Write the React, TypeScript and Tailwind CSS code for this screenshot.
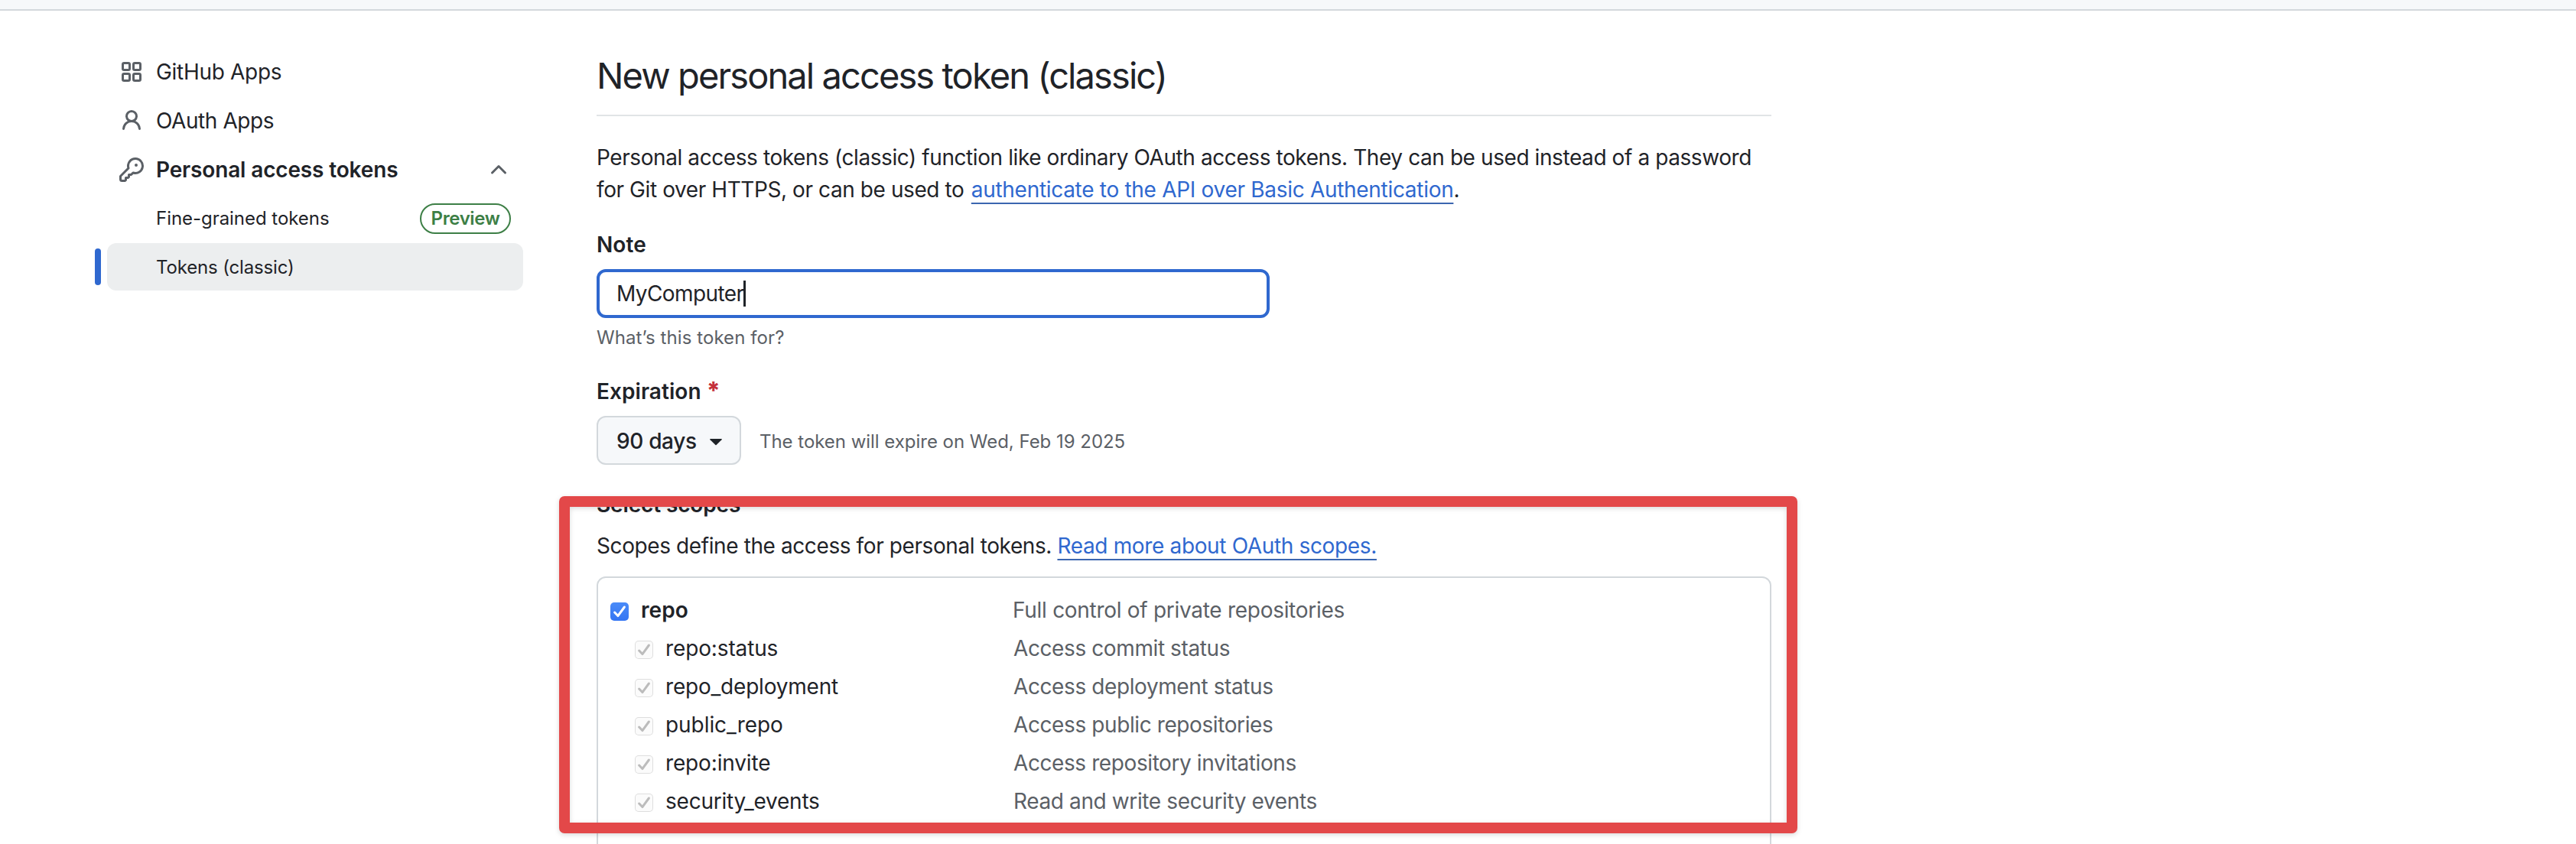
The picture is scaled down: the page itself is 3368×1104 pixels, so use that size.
const scopes = [
  { name: 'repo:status', desc: 'Access commit status', nameCls: 'tracking-[-0.13px]', descCls: 'tracking-[-0.4px]' },
  { name: 'repo_deployment', desc: 'Access deployment status', nameCls: 'tracking-[-0.2px]', descCls: 'tracking-[-0.4px]' },
  { name: 'public_repo', desc: 'Access public repositories', nameCls: 'tracking-[-0.06px]', descCls: 'tracking-[-0.4px]' },
  { name: 'repo:invite', desc: 'Access repository invitations', nameCls: 'tracking-[-0.15px]', descCls: 'tracking-[-0.41px]' },
  { name: 'security_events', desc: 'Read and write security events', nameCls: 'tracking-[-0.22px]', descCls: 'tracking-[-0.38px]' },
];

const link =
  'text-[#2f68cf] underline decoration-[#3b66b0] decoration-2 underline-offset-[7px] [text-decoration-skip-ink:none]';

const icons = {
  person:
    'M10.561 8.073a6.005 6.005 0 0 1 3.432 5.142.75.75 0 1 1-1.498.07 4.5 4.5 0 0 0-8.99 0 .75.75 0 0 1-1.498-.07 6.004 6.004 0 0 1 3.431-5.142 3.999 3.999 0 1 1 5.123 0ZM10.5 5a2.5 2.5 0 1 0-5 0 2.5 2.5 0 0 0 5 0Z',
  key: 'M10.5 0a5.499 5.499 0 1 1-1.288 10.848l-.932.932a.749.749 0 0 1-.53.22H7v.75a.749.749 0 0 1-.22.53l-.5.5a.749.749 0 0 1-.53.22H5v.75a.749.749 0 0 1-.22.53l-.5.5a.749.749 0 0 1-.53.22h-2A1.75 1.75 0 0 1 0 14.25v-2c0-.199.079-.389.22-.53l4.932-4.932A5.5 5.5 0 0 1 10.5 0Zm-4 5.5c-.001.431.069.86.205 1.269a.75.75 0 0 1-.181.768L1.5 12.56v1.69c0 .138.112.25.25.25h1.69l.06-.06v-1.19a.75.75 0 0 1 .75-.75h1.19l.06-.06v-1.19a.75.75 0 0 1 .75-.75h1.19l1.023-1.025a.75.75 0 0 1 .768-.18A4 4 0 1 0 6.5 5.5ZM11 6a1 1 0 1 1 0-2 1 1 0 0 1 0 2Z',
  chevronUp:
    'M3.22 10.53a.749.749 0 0 1 0-1.06l4.25-4.25a.749.749 0 0 1 1.06 0l4.25 4.25a.749.749 0 1 1-1.06 1.06L8 6.811 4.28 10.53a.749.749 0 0 1-1.06 0Z',
};

function Icon({ name, className }: { name: keyof typeof icons; className: string }) {
  return (
    <svg viewBox="0 0 16 16" className={className} fill="currentColor">
      <path d={icons[name]} />
    </svg>
  );
}

function AppsIcon({ className }: { className: string }) {
  return (
    <svg viewBox="0 0 16 16" className={className} fill="none" stroke="currentColor" strokeWidth="1.5">
      <rect x="2.25" y="2.25" width="4.5" height="4.5" rx="0.9" />
      <rect x="9.25" y="2.25" width="4.5" height="4.5" rx="0.9" />
      <rect x="2.25" y="9.25" width="4.5" height="4.5" rx="0.9" />
      <rect x="9.25" y="9.25" width="4.5" height="4.5" rx="0.9" />
    </svg>
  );
}

function CheckMark({ className }: { className: string }) {
  return (
    <svg viewBox="0 0 24 24" className={className} fill="none" strokeWidth="3" strokeLinecap="round" strokeLinejoin="round">
      <path d="M5.6 13L9.9 17.6L18.4 6" />
    </svg>
  );
}

function Sidebar() {
  return (
    <nav className="w-[544px] shrink-0">
      <div className="flex h-16 items-center pl-4">
        <AppsIcon className="mr-4 size-8 text-[#5b6066]" />
        <span className="tracking-[-0.31px]">GitHub Apps</span>
      </div>
      <div className="flex h-16 items-center pl-4">
        <Icon name="person" className="mr-4 size-8 text-[#5b6066]" />
        <span className="tracking-[-0.41px]">OAuth Apps</span>
      </div>
      <div className="flex h-16 items-center px-4">
        <Icon name="key" className="mr-4 size-8 text-[#5b6066]" />
        <span className="flex-1 font-semibold tracking-[-0.15px]">Personal access tokens</span>
        <Icon name="chevronUp" className="size-8 text-[#5b6066]" />
      </div>
      <div className="flex h-16 items-center justify-between pr-4 pl-16 text-2xl">
        <span className="tracking-[-0.04px]">Fine-grained tokens</span>
        <span className="flex h-10 w-[119px] items-center justify-center rounded-full border-2 border-[#3d7f46] font-semibold tracking-[-0.4px] text-[#3d7f46]">
          Preview
        </span>
      </div>
      <div className="relative flex h-[62px] items-center rounded-xl bg-[#eceeef] pt-0.5 pl-16 text-2xl">
        <span className="absolute top-[7px] -left-4 h-12 w-2 rounded-full bg-[#2f68cf]" />
        <span className="tracking-[-0.15px]">Tokens (classic)</span>
      </div>
    </nav>
  );
}

function ScopeBox() {
  return (
    <div className="mt-[19px] h-[400px] rounded-xl border-2 border-[#d3d8dc] pt-[17px]">
      <div className="flex h-[50px] items-center pl-4">
        <span className="mt-1 mr-4 flex size-6 shrink-0 rounded-[5px] bg-linear-to-b from-[#4a8bf8] to-[#3475f3]">
          <CheckMark className="size-6 stroke-white" />
        </span>
        <span className="w-[486px] font-semibold tracking-[0.1px]">repo</span>
        <span className="tracking-[-0.29px] text-[#5b6066]">Full control of private repositories</span>
      </div>
      {scopes.map((s) => (
        <div key={s.name} className="flex h-[50px] items-center pl-12">
          <span className="mt-1 mr-4 flex size-6 shrink-0 rounded-[5px] bg-[#fbfbfb] ring-1 ring-[#dedede] ring-inset">
            <CheckMark className="size-6 stroke-[#bcbcbc]" />
          </span>
          <span className={`w-[455px] ${s.nameCls}`}>{s.name}</span>
          <span className={`text-[#5b6066] ${s.descCls}`}>{s.desc}</span>
        </div>
      ))}
    </div>
  );
}

export default function App() {
  return (
    <div className="relative h-[1104px] w-[3368px] overflow-hidden bg-white font-[Inter,'Liberation_Sans',sans-serif] text-[28px] leading-[42px] text-[#1f2328]">
      <div className="h-[14px] border-b-2 border-[#d3d8dc] bg-[#f6f8fa]" />
      <div className="flex gap-24 pt-12 pl-[140px]">
        <Sidebar />
        <main className="w-[1536px]">
          <h1 className="h-[90px] border-b-2 border-[#e1e4e6] pt-px text-[47px] leading-[72px] tracking-[-1.9px]">
            New personal access token (classic)
          </h1>
          <p className="mt-[33px] whitespace-nowrap">
            <span className="tracking-[-0.415px]">
              Personal access tokens (classic) function like ordinary OAuth access tokens. They can be used instead of a password
              <br />
              for Git over HTTPS, or can be used to{' '}
            </span>
            <a className={`ml-[2px] tracking-[-0.3px] ${link}`}>authenticate to the API over Basic Authentication</a>.
          </p>

          <label className="mt-[30px] block font-semibold tracking-[0.1px]">Note</label>
          <div className="mt-[11px] flex h-16 w-[880px] items-center rounded-xl border-4 border-[#2f68cf] pl-[22px]">
            <span className="tracking-[-0.59px]">MyComputer</span>
            <span className="-ml-px h-[34px] w-[3px] bg-[#1f2328]" />
          </div>
          <p className="mt-2 text-2xl leading-9 tracking-[0.08px] text-[#5b6066]">What’s this token for?</p>

          <div className="mt-[31px] font-semibold tracking-[0.06px]">
            Expiration <span className="text-[31px] leading-none font-extrabold text-[#c4303c]">*</span>
          </div>
          <div className="mt-[11px] flex h-16 items-center">
            <button className="flex h-16 w-[189px] items-center rounded-xl border-2 border-[#d3d8dc] bg-[#f6f8fa] pt-px pl-6 font-medium tracking-[-0.34px]">
              90 days
              <svg viewBox="0 0 16 9" className="mt-1 ml-[17px] h-[9px] w-4 fill-[#1f2328]">
                <path d="M0.8 0h14.4q1.1 0.2 0.3 1.2L8.6 8.1q-0.6 0.5-1.2 0L0.5 1.2Q-0.3 0.2 0.8 0Z" />
              </svg>
            </button>
            <span className="ml-6 pt-1 text-2xl tracking-[-0.03px] text-[#5b6066]">The token will expire on Wed, Feb 19 2025</span>
          </div>

          <div className="mt-[31px] font-semibold tracking-[-0.14px]">Select scopes</div>
          <p className="mt-3 whitespace-nowrap">
            <span className="tracking-[-0.4px]">Scopes define the access for personal tokens. </span>
            <a className={`tracking-[-0.35px] ${link}`}>Read more about OAuth scopes.</a>
          </p>
          <ScopeBox />
        </main>
      </div>

      {/* Highlight frame over the scopes section */}
      <div className="absolute top-[649px] left-[731px] h-[441px] w-[1619px] rounded-[7px] border-14 border-[#e34849] drop-shadow-[0_2px_3px_rgba(0,0,0,0.15)]" />
    </div>
  );
}
